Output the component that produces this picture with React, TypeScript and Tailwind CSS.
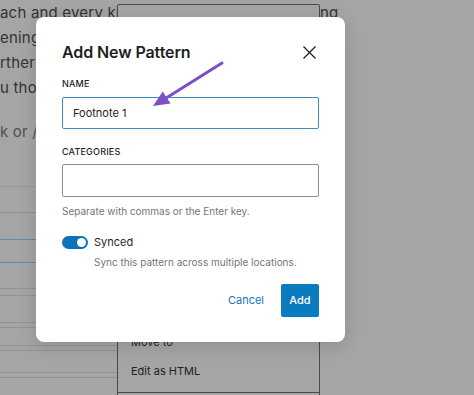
export default function App() {
  return (
    <div className="relative w-[474px] h-[395px] overflow-hidden bg-[#a5a5a5] font-['Inter',sans-serif]">
      {/* Page content under the overlay */}
      <div className="text-[15px] leading-[25px] text-[#333] whitespace-nowrap tracking-[0.2px]">
        <div className="flex">
          <span className="w-[117px] overflow-hidden">ach and every kind</span>
          <span className="ml-[203px]">ng</span>
        </div>
        <div>ening</div>
        <div>rther</div>
        <div>u thought</div>
        <div className="mt-[19px] text-[#505050]">k or /</div>
      </div>

      {/* List rows on the left */}
      <div className="w-[117px] mt-[42px] flex flex-col">
        <div className="h-px bg-[#979797]" />
        <div className="h-px mt-[25px] bg-[#8e8e8e]" />
        <div className="h-px mt-[26px] bg-[#5f89ad]" />
        <div className="h-px mt-[22px] bg-[#5f89ad]" />
        <div className="h-px mt-[25px] bg-[#939393]" />
        <div className="h-px mt-[6px] bg-[#939393]" />
        <div className="h-px mt-[26px] bg-[#939393]" />
        <div className="h-px mt-[4px] bg-[#939393]" />
        <div className="h-px mt-[17px] bg-[#939393]" />
        <div className="h-px mt-[4px] bg-[#939393]" />
        <div className="h-px mt-[21px] bg-[#939393]" />
        <div className="h-px mt-[4px] bg-[#939393]" />
      </div>

      {/* Block options menu */}
      <div className="absolute left-[117px] top-[4px] w-[203px] h-[420px] border border-[#4a4a4a] rounded-t-[2px] bg-[#a5a5a5] flex flex-col justify-end">
        <div className="text-[11px] text-[#222] pb-[10px]">
          <div className="h-[29px] leading-[29px] pl-[13px]">Move to</div>
          <div className="h-[29px] leading-[29px] pl-[13px]">Edit as HTML</div>
          <div className="h-[21px] mt-[6px] border-t border-[#4a4a4a]" />
        </div>
      </div>

      {/* Modal */}
      <div className="absolute left-[36px] top-[17px] w-[309px] bg-white rounded-[8px] shadow-[0_4px_18px_rgba(0,0,0,0.14)] px-[26px] pt-[25px] pb-[25px] flex flex-col">
        <div className="flex items-center justify-between h-[20px]">
          <h1 className="text-[16px] leading-[20px] font-semibold text-[#1e1e1e] tracking-[-0.1px]">Add New Pattern</h1>
          <svg width="15" height="15" viewBox="0 0 15 15" className="mr-[2px]">
            <path d="M1.5 1.5L13.5 13.5M13.5 1.5L1.5 13.5" stroke="#1e1e1e" strokeWidth="1.3" fill="none" />
          </svg>
        </div>

        <label className="mt-[16px] text-[9px] leading-[12px] font-medium uppercase text-[#1e1e1e] tracking-[0.2px]">Name</label>
        <div className="mt-[7px] h-[32px] border-[1.5px] border-[#3a8bbf] rounded-[2px] flex items-center px-[10px] text-[11px] text-[#1e1e1e]">
          Footnote 1
        </div>

        <label className="mt-[17px] text-[9px] leading-[12px] font-medium uppercase text-[#1e1e1e] tracking-[0.2px]">Categories</label>
        <div className="mt-[6px] h-[33px] border border-[#8f8f8f] rounded-[2px]" />
        <p className="mt-[7px] text-[10px] leading-[14px] text-[#757575]">Separate with commas or the Enter key.</p>

        <div className="mt-[17px] h-[14px] flex items-center gap-[6px]">
          <div className="w-[26px] h-[13px] rounded-full bg-[#0b74b8] flex items-center justify-end pr-[2px]">
            <div className="w-[9px] h-[9px] rounded-full bg-white" />
          </div>
          <span className="text-[11px] text-[#1e1e1e]">Synced</span>
        </div>
        <p className="mt-[6px] pl-[32px] text-[10px] leading-[14px] text-[#757575]">Sync this pattern across multiple locations.</p>

        <div className="mt-[15px] flex justify-end items-center gap-[8px]">
          <button className="h-[33px] px-[9px] text-[11px] text-[#1479b3]">Cancel</button>
          <button className="h-[33px] w-[38px] rounded-[2px] bg-[#0b7bbf] text-[11px] font-medium text-white">Add</button>
        </div>
      </div>

      {/* Annotation arrow */}
      <svg className="absolute left-0 top-0 pointer-events-none" width="474" height="395" viewBox="0 0 474 395">
        <line x1="222" y1="63" x2="167" y2="97.5" stroke="#7b4fc6" strokeWidth="3" strokeLinecap="round" />
        <polygon points="153,106 170.5,103.5 162.7,91.4" fill="#7b4fc6" />
      </svg>
    </div>
  )
}
